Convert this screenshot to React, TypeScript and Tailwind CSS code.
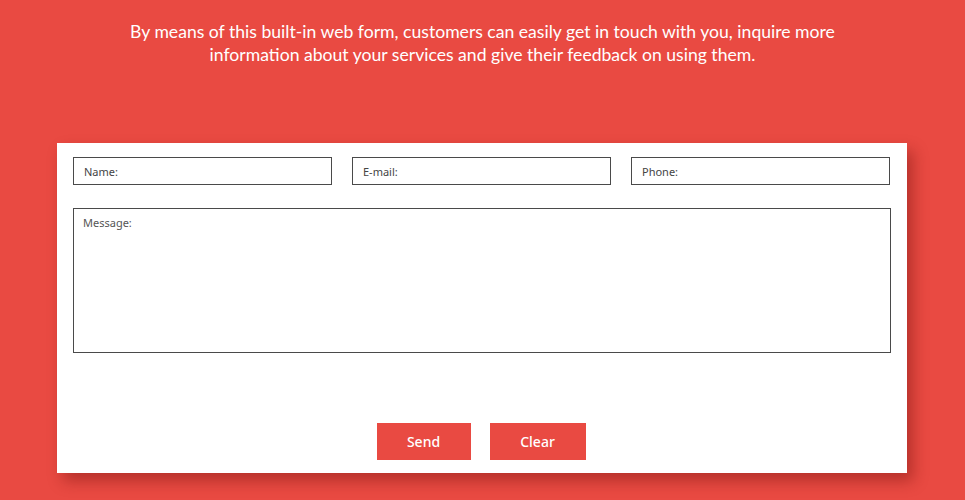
import React from "react";

export default function App() {
  return (
    <div className="min-h-[500px] w-full bg-[#e94a42] pt-[20px]">
      <p className="mx-auto w-[740px] text-center text-[17.6px] leading-[23px] text-white font-['Lato','Open_Sans',sans-serif]">
        By means of this built-in web form, customers can easily get in touch with you, inquire more information about your services and give their feedback on using them.
      </p>

      <form
        className="ml-[57px] mt-[77px] h-[330px] w-[850px] bg-white px-[16px] pt-[14px] shadow-[6px_8px_14px_rgba(120,20,15,0.45)] font-['Noto_Sans','Open_Sans',sans-serif]"
        onSubmit={(e) => e.preventDefault()}
      >
        <div className="flex gap-[20px]">
          {["Name:", "E-mail:", "Phone:"].map((p) => (
            <input
              key={p}
              placeholder={p}
              className="h-[28px] w-[259px] border border-[#4a4a4a] px-[10px] text-[11px] text-[#333] outline-none placeholder:text-[#444]"
            />
          ))}
        </div>
        <textarea
          placeholder="Message:"
          className="mt-[23px] block h-[145px] w-[818px] resize-none border border-[#4a4a4a] px-[9px] py-[6px] text-[11px] text-[#333] outline-none placeholder:text-[#555]"
        />
        <div className="mt-[70px] flex justify-center gap-[19px] pr-[2px]">
          <button type="submit" className="h-[37px] w-[94px] bg-[#e94a42] pb-[1px] text-[14px] font-medium text-white">
            Send
          </button>
          <button type="reset" className="h-[37px] w-[96px] bg-[#e94a42] pb-[1px] text-[14px] font-medium text-white">
            Clear
          </button>
        </div>
      </form>
    </div>
  );
}
